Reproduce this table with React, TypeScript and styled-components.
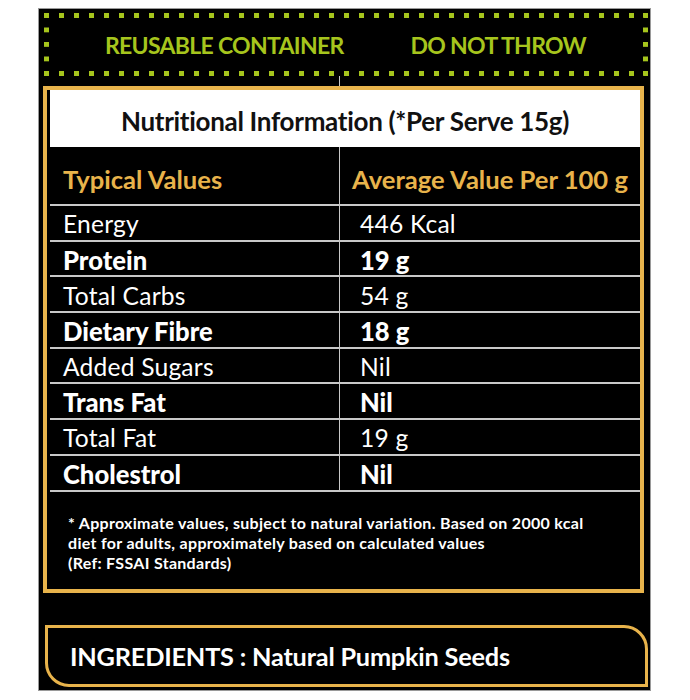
import React from "react";
import styled, { createGlobalStyle } from "styled-components";

const GOLD = "#e8b34b";
const LIME = "#a6c51d";
const LINE = "#c8c8c8";

const Global = createGlobalStyle`
  html, body { margin: 0; padding: 0; background: #ffffff; }
  body { font-family: Lato, "Open Sans", sans-serif; }
  * { box-sizing: border-box; }
`;

const Panel = styled.div`
  width: 613px;
  height: 683px;
  margin: 8px 0 0 38px;
  background: #000;
  border: 1px solid #9a9a9a;
  padding-top: 4px;
  display: flex;
  flex-direction: column;
`;

const DottedBox = styled.div`
  margin-left: 5px;
  width: 604px;
  height: 63px;
  background:
    linear-gradient(90deg, ${LIME} 0 5px, transparent 5px) 0 0 / 15px 5px repeat-x,
    linear-gradient(90deg, ${LIME} 0 5px, transparent 5px) 0 100% / 15px 5px repeat-x,
    linear-gradient(180deg, ${LIME} 0 5px, transparent 5px) 0 0 / 5px 14.5px repeat-y,
    linear-gradient(180deg, ${LIME} 0 5px, transparent 5px) 100% 0 / 5px 14.5px repeat-y;
  display: flex;
  align-items: center;
  padding-left: 61px;
  gap: 67px;
`;

const Notice = styled.span`
  color: ${LIME};
  font-family: Lato, sans-serif;
  font-weight: 700;
  font-size: 23px;
  letter-spacing: -0.7px;
`;

const Connector = styled.div`
  margin-left: 300px;
  width: 1px;
  height: 10px;
  background: ${LINE};
`;

const FactsBox = styled.div`
  margin-left: 4px;
  width: 601px;
  height: 507px;
  border: 4px solid ${GOLD};
  padding-left: 3px;
  display: flex;
  flex-direction: column;
`;

const Title = styled.div`
  height: 57px;
  background: #fff;
  color: #111;
  font-weight: 700;
  font-size: 26px;
  display: flex;
  align-items: center;
  justify-content: center;
  padding-top: 4px;
  letter-spacing: -0.3px;
`;

const Grid = styled.div`
  display: grid;
  grid-template-columns: 289px 1fr;
`;

const Cell = styled.div<{ $head?: boolean; $bold?: boolean; $right?: boolean }>`
  height: ${(p) => (p.$head ? "59px" : "35.7px")};
  border-bottom: 2px solid ${LINE};
  border-left: ${(p) => (p.$right ? `1px solid ${LINE}` : "none")};
  display: flex;
  align-items: center;
  padding-left: ${(p) => (p.$right ? (p.$head ? "12px" : "20px") : "13px")};
  padding-top: ${(p) => (p.$head ? "6px" : "2px")};
  color: ${(p) => (p.$head ? GOLD : "#fff")};
  font-size: ${(p) => (p.$head ? "25.6px" : p.$bold ? "25.6px" : "24.6px")};
  font-weight: ${(p) => (p.$head ? 700 : p.$bold ? 900 : 400)};
  letter-spacing: ${(p) => (p.$bold ? "0" : p.$head ? "0" : "0.2px")};
`;

const Footnote = styled.p`
  margin: 21px 0 0 18px;
  color: #fff;
  font-size: 16px;
  font-weight: 700;
  line-height: 20px;
  letter-spacing: 0.3px;
`;

const Ingredients = styled.div`
  margin: 32px 0 0 6px;
  width: 603px;
  height: 62px;
  border: 3px solid ${GOLD};
  border-radius: 0 24px 0 24px;
  display: flex;
  align-items: center;
  padding-left: 22px;
  color: #fff;
  font-size: 25.3px;
  font-weight: 700;
  letter-spacing: -0.2px;
`;

const rows: { name: string; value: string; bold?: boolean }[] = [
  { name: "Energy", value: "446 Kcal" },
  { name: "Protein", value: "19 g", bold: true },
  { name: "Total Carbs", value: "54 g" },
  { name: "Dietary Fibre", value: "18 g", bold: true },
  { name: "Added Sugars", value: "Nil" },
  { name: "Trans Fat", value: "Nil", bold: true },
  { name: "Total Fat", value: "19 g" },
  { name: "Cholestrol", value: "Nil", bold: true },
];

export default function App() {
  return (
    <>
      <Global />
      <Panel>
        <DottedBox>
          <Notice>REUSABLE CONTAINER</Notice>
          <Notice>DO NOT THROW</Notice>
        </DottedBox>
        <Connector />
        <FactsBox>
          <Title>Nutritional Information (*Per Serve 15g)</Title>
          <Grid>
            <Cell $head>Typical Values</Cell>
            <Cell $head $right>Average Value Per 100 g</Cell>
            {rows.map((r) => (
              <React.Fragment key={r.name}>
                <Cell $bold={r.bold}>{r.name}</Cell>
                <Cell $bold={r.bold} $right>{r.value}</Cell>
              </React.Fragment>
            ))}
          </Grid>
          <Footnote>
            * Approximate values, subject to natural variation. Based on 2000 kcal
            <br />
            diet for adults, approximately based on calculated values
            <br />
            (Ref: FSSAI Standards)
          </Footnote>
        </FactsBox>
        <Ingredients>INGREDIENTS : Natural Pumpkin Seeds</Ingredients>
      </Panel>
    </>
  );
}
